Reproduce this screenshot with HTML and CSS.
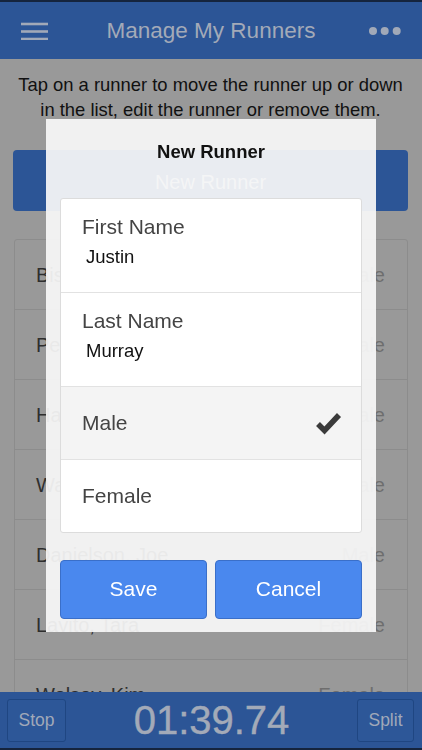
FILE: index.html
```html
<!DOCTYPE html>
<html lang="en">
<head>
  <meta charset="UTF-8" />
  <meta name="viewport" content="width=device-width, initial-scale=1.0"/>
  <title>Manage My Runners</title>
  <link rel="stylesheet" href="styles.css">
</head>
<body>
  <div class="statusbar"></div>

  <header class="topbar">
    <div class="topbar-side">
      <svg class="menu-icon" width="27" height="18" viewBox="0 0 27 18">
        <line x1="0" y1="2" x2="27" y2="2" />
        <line x1="0" y1="9.5" x2="27" y2="9.5" />
        <line x1="0" y1="17" x2="27" y2="17" />
      </svg>
    </div>
    <h1 class="topbar-title">Manage My Runners</h1>
    <div class="topbar-side right">
      <svg class="more-icon" width="32" height="8" viewBox="0 0 32 8">
        <circle cx="4" cy="4" r="4" />
        <circle cx="15.7" cy="4" r="4" />
        <circle cx="27.7" cy="4" r="4" />
      </svg>
    </div>
  </header>

  <main class="content">
    <p class="hint">Tap on a runner to move the runner up or down in the list, edit the runner or remove them.</p>
    <button class="new-btn">New Runner</button>

    <ul class="runners">
      <li><span class="name">Bishop, Sam</span><span class="gender">Male</span></li>
      <li><span class="name">Peters, Dan</span><span class="gender">Male</span></li>
      <li><span class="name">Harris, Tom</span><span class="gender">Male</span></li>
      <li><span class="name">Walker, Ben</span><span class="gender">Male</span></li>
      <li><span class="name">Danielson, Joe</span><span class="gender">Male</span></li>
      <li><span class="name">Lavito, Tara</span><span class="gender">Female</span></li>
      <li><span class="name">Welsey, Kim</span><span class="gender">Female</span></li>
    </ul>
  </main>

  <footer class="timerbar">
    <button class="timer-btn">Stop</button>
    <div class="timer">01:39.74</div>
    <button class="timer-btn split">Split</button>
  </footer>

  <div class="overlay">
    <div class="modal">
      <h2 class="modal-title">New Runner</h2>
      <div class="form-card">
        <div class="field">
          <div class="field-label">First Name</div>
          <div class="field-value">Justin</div>
        </div>
        <div class="field">
          <div class="field-label">Last Name</div>
          <div class="field-value">Murray</div>
        </div>
        <div class="option selected">
          <span>Male</span>
          <svg class="check" width="27" height="24" viewBox="0 0 27 24">
            <polyline points="3,13 9.5,19.5 24,4" />
          </svg>
        </div>
        <div class="option">
          <span>Female</span>
        </div>
      </div>
      <div class="modal-actions">
        <button class="action-btn">Save</button>
        <button class="action-btn">Cancel</button>
      </div>
    </div>
  </div>
</body>
</html>
```

FILE: styles.css
```css
body {
  font-family: 'Liberation Sans', Arial, sans-serif;
  background-color: #999999;
  margin: 0;
  height: 750px;
  overflow: hidden;
  color: #111;
}

.statusbar {
  height: 2px;
  background-color: #15243d;
}

.topbar {
  height: 57px;
  display: flex;
  align-items: center;
  padding: 0 21px;
  background-color: #2c5596;
}

.topbar-side {
  width: 32px;
  display: flex;
  align-items: center;
}

.topbar-side.right {
  justify-content: flex-end;
}

.menu-icon line {
  stroke: #a1a9b8;
  stroke-width: 2.6;
}

.more-icon circle {
  fill: #a1a9b8;
}

.topbar-title {
  flex: 1;
  margin: 0;
  text-align: center;
  font-size: 22.5px;
  font-weight: normal;
  color: #a3aab8;
}

.content {
  padding: 0 14px 0 13px;
}

.hint {
  margin: 13px -1px 0;
  text-align: center;
  font-size: 18.4px;
  line-height: 25px;
  color: #111;
}

.new-btn {
  display: block;
  width: 100%;
  height: 61px;
  margin-top: 28px;
  padding-top: 4px;
  border: none;
  border-radius: 4px;
  background-color: #2c5596;
  color: #c8cfdc;
  font-family: inherit;
  font-size: 20px;
}

.runners {
  list-style: none;
  margin: 28px 0 0 1px;
  padding: 0;
  border: 1px solid #8c8c8c;
  border-radius: 3px;
}

.runners li {
  height: 70px;
  box-sizing: border-box;
  display: flex;
  align-items: center;
  justify-content: space-between;
  padding: 2px 22px 0 21px;
  border-bottom: 1px solid #8c8c8c;
  font-size: 20px;
}

.name {
  color: #2e2e2e;
}

.gender {
  color: #6e6e6e;
}

.timerbar {
  position: fixed;
  left: 0;
  right: 0;
  bottom: 0;
  height: 56px;
  display: flex;
  align-items: center;
  justify-content: space-between;
  padding: 0 8px 0 7px;
  background-color: #2c5596;
  border-bottom: 2px solid #15243d;
}

.timer-btn {
  width: 59px;
  height: 43px;
  margin-top: 1px;
  border: 1px solid #1f4682;
  border-radius: 3px;
  background-color: #2d5798;
  color: #a1a9b8;
  font-family: inherit;
  font-size: 17.5px;
}

.timer-btn.split {
  width: 57px;
}

.timer {
  font-size: 40px;
  color: #a3aab8;
  -webkit-text-stroke: 0.4px #a3aab8;
}

.overlay {
  position: fixed;
  inset: 0;
  display: flex;
  align-items: center;
  justify-content: center;
}

.modal {
  width: 302px;
  padding: 22px 14px 13px;
  background-color: rgba(247, 247, 247, 0.93);
}

.modal-title {
  margin: 0 0 35px;
  text-align: center;
  font-size: 18.5px;
  line-height: 22px;
  color: #111;
}

.form-card {
  background: white;
  border: 1px solid #dcdcdc;
  border-radius: 3px;
}

.field {
  padding: 17px 21px 24px;
  border-bottom: 1px solid #e2e2e2;
}

.field-label {
  font-size: 21px;
  line-height: 22px;
  color: #444;
}

.field-value {
  margin-top: 8px;
  padding-left: 4px;
  font-size: 18.5px;
  line-height: 22px;
  color: #111;
}

.option {
  height: 72px;
  display: flex;
  align-items: center;
  justify-content: space-between;
  padding: 0 19px 0 21px;
  font-size: 21px;
  color: #444;
}

.option.selected {
  background-color: #f4f4f4;
  border-bottom: 1px solid #e2e2e2;
}

.check polyline {
  fill: none;
  stroke: #3a3a3a;
  stroke-width: 5.5;
}

.modal-actions {
  display: flex;
  gap: 8px;
  margin-top: 27px;
}

.action-btn {
  flex: 1;
  height: 59px;
  border: 1px solid #3a6fc9;
  border-radius: 4px;
  background-color: #4a88ee;
  color: white;
  font-family: inherit;
  font-size: 21px;
}
```
